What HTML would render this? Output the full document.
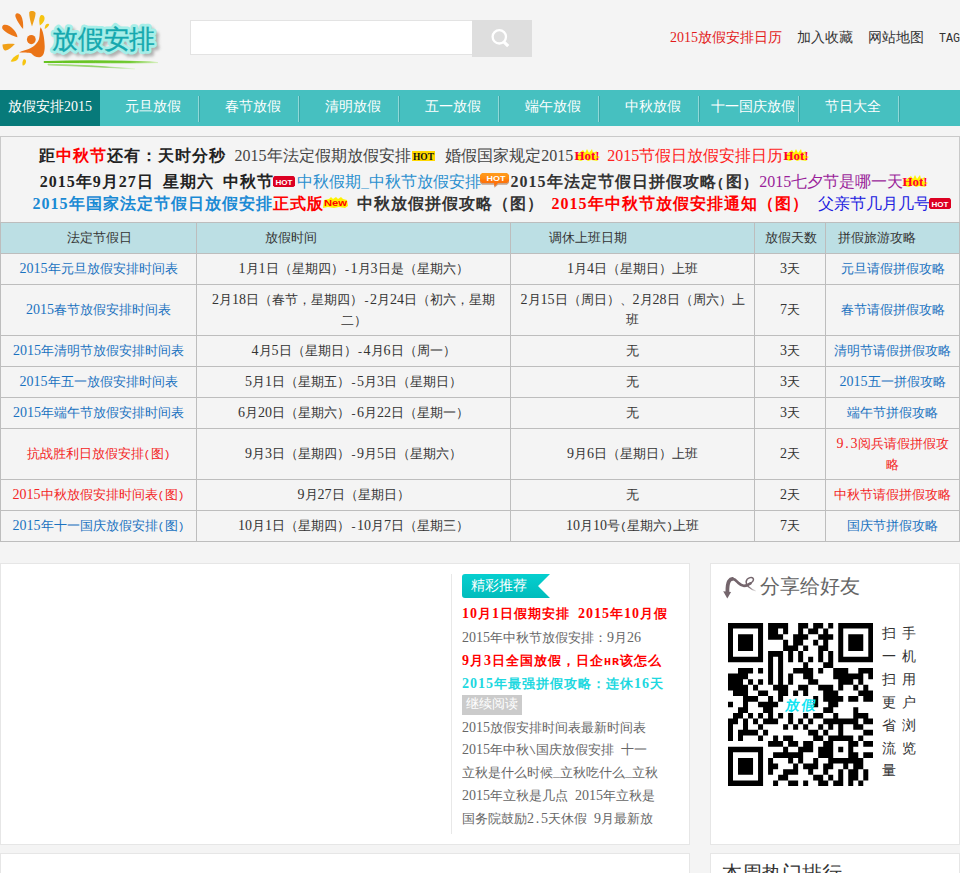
<!DOCTYPE html><html><head><meta charset="utf-8"><style>
html,body{margin:0;padding:0}
body{width:960px;height:873px;overflow:hidden;position:relative;background:#f4f4f4;
 font-family:"Liberation Serif",sans-serif;color:#333;font-size:14px}
.a{position:absolute;white-space:nowrap}
.m{font-family:"Liberation Mono",monospace;font-size:83.333%}
.f13{font-size:13px}
.f13 .m{font-size:89.7%}
.f13 .d{font-size:107.7%}
</style></head><body><svg class="a" style="left:0px;top:0px;overflow:visible" width="170" height="75" viewBox="0 0 170 75"><defs><filter id="lb" x="-20%" y="-20%" width="140%" height="140%"><feGaussianBlur stdDeviation="1.6"/></filter><linearGradient id="gl" x1="0" x2="1"><stop offset="0" stop-color="#62c21c"/><stop offset="0.75" stop-color="#6cc82a"/><stop offset="1" stop-color="#d8f0c0"/></linearGradient><linearGradient id="gl2" x1="0" x2="1"><stop offset="0" stop-color="#a8dc80"/><stop offset="0.6" stop-color="#8cd060"/><stop offset="1" stop-color="#e6f4dc"/></linearGradient></defs><path d="M2.5,26 C4,23.5 10,25 14,30 C16,32.5 17.5,35 17.4,37.2 C13,36 6,33 3,29.5 C2,28.5 2,27 2.5,26 Z" fill="#ec7818"/><path d="M15.5,14.5 C16.5,12.5 19,13 21,15.5 C23,19 23.5,25 23.1,29 C21,27 17.5,21.5 16,18 C15.3,16.5 15.2,15.3 15.5,14.5 Z" fill="#ec7818"/><path d="M29.2,12.5 C30,10.5 34.5,10.5 35.6,13 C35.5,17 33.5,22 32,26.5 C30.5,22 29,16 29.2,12.5 Z" fill="#f0a018"/><path d="M40,16.5 C41,14.5 43.5,14.5 44.5,17.5 C45,20.5 42.5,24 39.8,25.4 C39,22 39,18.5 40,16.5 Z" fill="#f6c410"/><path d="M46,24.5 C47,23.3 49,23.5 49.2,24.8 C48.5,26.5 46.5,28.2 44.7,29 C44.8,27 45.2,25.5 46,24.5 Z" fill="#f6c410"/><path d="M2.5,44.5 C6,43.5 11,43.5 14.9,43.9 C12,47 8.5,50 5.7,50.6 C3.5,50.5 2.5,47.5 2.5,44.5 Z" fill="#f0a018"/><path d="M18.8,54.2 C19.2,57 18,60 15.5,61 C13,61.8 11,61.8 10.7,61.3 C12,58.5 15,55.5 18.8,54.2 Z" fill="#f6c410"/><path d="M23.5,59.5 C25,58.5 26.3,60 26,62 C25.5,64.5 24,65.8 22.7,65.5 C22,63.5 22.5,61 23.5,59.5 Z" fill="#f6c410"/><ellipse cx="31.3" cy="39.6" rx="4.4" ry="4.6" fill="#ea7417"/><path d="M40.5,27.2 C43,30 44.5,38 44.7,46 C44.8,52 43.5,56 40.5,57 C37,57.8 33.5,56 31.5,53.5 C29,52.3 23,52.8 19.2,52.5 C21,51 25,50 28,49.2 C33,47.5 37.5,43.5 39,39 C40,35 39.5,30 40.5,27.2 Z" fill="#ea7417"/><text x="55" y="50.5" textLength="103" lengthAdjust="spacingAndGlyphs" style="font-size:26px;font-family:&quot;Liberation Sans&quot;,sans-serif" fill="#9a9a9a" stroke="#9a9a9a" stroke-width="5" stroke-linejoin="round" filter="url(#lb)" opacity="0.75">放假安排</text><text x="52" y="47.5" textLength="103" lengthAdjust="spacingAndGlyphs" style="font-size:26px;font-family:&quot;Liberation Sans&quot;,sans-serif" fill="#a6eee8" stroke="#a6eee8" stroke-width="6" stroke-linejoin="round">放假安排</text><text x="52" y="47.5" textLength="103" lengthAdjust="spacingAndGlyphs" style="font-size:26px;font-family:&quot;Liberation Sans&quot;,sans-serif" fill="#14a8ae" stroke="#14a8ae" stroke-width="0.35">放假安排</text><path d="M44,61.6 Q90,60 150,61.8 Q155,62.2 158,62.6 Q120,63 44,62.4 Z" fill="url(#gl)" stroke="url(#gl)" stroke-width="1"/><path d="M48,64.2 Q90,65 135,68.9 Q95,66.5 48,65 Z" fill="url(#gl2)" stroke="url(#gl2)" stroke-width="0.8"/></svg><div class="a" style="left:190px;top:20px;width:282px;height:33px;border:1px solid #e3e3e3;border-right:0;background:#fff"></div><div class="a" style="left:472px;top:20px;width:60px;height:37px;background:#dedede"><svg width="60" height="37" style="position:absolute;left:0;top:0"><circle cx="27.3" cy="16.8" r="6.7" fill="none" stroke="#fff" stroke-width="2.3"/><path d="M31.8 21.8 L36.2 26.2" stroke="#fff" stroke-width="3.2"/></svg></div><div class="a" style="left:670px;top:29px;line-height:18px;font-size:14px;color:#e31b1b"><span class="d">2015</span>放假安排日历</div><div class="a" style="left:797px;top:29px;line-height:18px;font-size:14px;color:#333">加入收藏</div><div class="a" style="left:868px;top:29px;line-height:18px;font-size:14px;color:#333">网站地图</div><svg class="a" style="left:939px;top:30px" width="21" height="16"><text x="0" y="11.8" textLength="21" lengthAdjust="spacingAndGlyphs" style="font-family:&quot;Liberation Mono&quot;;font-size:13.5px" fill="#333">TAG</text></svg><div class="a" style="left:0;top:90px;width:960px;height:36px;background:#46c0c0"></div><div class="a" style="left:0;top:90px;width:100px;height:36px;background:#077a7a"></div><div class="a" style="left:0px;top:89px;width:100px;height:36px;line-height:36px;text-align:center;color:#fff;font-size:14px">放假安排<span class="d">2015</span></div><div class="a" style="left:102.5px;top:89px;width:100px;height:36px;line-height:36px;text-align:center;color:#fff;font-size:14px">元旦放假</div><div class="a" style="left:198px;top:96px;width:1px;height:26px;background:#90d8d8"></div><div class="a" style="left:199px;top:96px;width:1px;height:26px;background:#3aa8a8"></div><div class="a" style="left:202.5px;top:89px;width:100px;height:36px;line-height:36px;text-align:center;color:#fff;font-size:14px">春节放假</div><div class="a" style="left:298px;top:96px;width:1px;height:26px;background:#90d8d8"></div><div class="a" style="left:299px;top:96px;width:1px;height:26px;background:#3aa8a8"></div><div class="a" style="left:302.5px;top:89px;width:100px;height:36px;line-height:36px;text-align:center;color:#fff;font-size:14px">清明放假</div><div class="a" style="left:398px;top:96px;width:1px;height:26px;background:#90d8d8"></div><div class="a" style="left:399px;top:96px;width:1px;height:26px;background:#3aa8a8"></div><div class="a" style="left:402.5px;top:89px;width:100px;height:36px;line-height:36px;text-align:center;color:#fff;font-size:14px">五一放假</div><div class="a" style="left:498px;top:96px;width:1px;height:26px;background:#90d8d8"></div><div class="a" style="left:499px;top:96px;width:1px;height:26px;background:#3aa8a8"></div><div class="a" style="left:502.5px;top:89px;width:100px;height:36px;line-height:36px;text-align:center;color:#fff;font-size:14px">端午放假</div><div class="a" style="left:598px;top:96px;width:1px;height:26px;background:#90d8d8"></div><div class="a" style="left:599px;top:96px;width:1px;height:26px;background:#3aa8a8"></div><div class="a" style="left:602.5px;top:89px;width:100px;height:36px;line-height:36px;text-align:center;color:#fff;font-size:14px">中秋放假</div><div class="a" style="left:698px;top:96px;width:1px;height:26px;background:#90d8d8"></div><div class="a" style="left:699px;top:96px;width:1px;height:26px;background:#3aa8a8"></div><div class="a" style="left:702.5px;top:89px;width:100px;height:36px;line-height:36px;text-align:center;color:#fff;font-size:14px">十一国庆放假</div><div class="a" style="left:798px;top:96px;width:1px;height:26px;background:#90d8d8"></div><div class="a" style="left:799px;top:96px;width:1px;height:26px;background:#3aa8a8"></div><div class="a" style="left:802.5px;top:89px;width:100px;height:36px;line-height:36px;text-align:center;color:#fff;font-size:14px">节日大全</div><div class="a" style="left:898px;top:96px;width:1px;height:26px;background:#90d8d8"></div><div class="a" style="left:899px;top:96px;width:1px;height:26px;background:#3aa8a8"></div><div class="a" style="left:0;top:136px;width:958px;height:404px;border:1px solid #c9c9c9;background:#f4f4f4"></div><div class="a" style="left:39px;top:146px;font-size:16px;line-height:20px;color:#222;letter-spacing:1px;font-weight:bold;">距<span style="color:#f00">中秋节</span>还有：天时分秒</div><div class="a" style="left:234.6px;top:146px;font-size:16px;line-height:20px;color:#444;"><span class="d">2015</span>年法定假期放假安排</div><div class="a" style="left:445.3px;top:146px;font-size:16px;line-height:20px;color:#444;">婚假国家规定<span class="d">2015</span></div><div class="a" style="left:607.3px;top:146px;font-size:16px;line-height:20px;color:#f22;"><span class="d">2015</span>节假日放假安排日历</div><div class="a" style="left:39.7px;top:172px;font-size:16px;line-height:20px;color:#222;letter-spacing:1px;font-weight:bold;"><span class="d">2015</span>年<span class="d">9</span>月<span class="d">27</span>日<span class="m"> </span>星期六<span class="m"> </span>中秋节</div><div class="a" style="left:297px;top:172px;font-size:16px;line-height:20px;color:#2a8fcf;">中秋假期<span class="m">_</span>中秋节放假安排</div><div class="a" style="left:510.5px;top:172px;font-size:16px;line-height:20px;color:#333;letter-spacing:1px;font-weight:bold;"><span class="d">2015</span>年法定节假日拼假攻略<span class="m">(</span>图<span class="m">)</span></div><div class="a" style="left:759.3px;top:172px;font-size:16px;line-height:20px;color:#9a1f9a;"><span class="d">2015</span>七夕节是哪一天</div><div class="a" style="left:32.6px;top:194px;font-size:16px;line-height:20px;color:#1a8ad4;letter-spacing:1px;font-weight:bold;"><span class="d">2015</span>年国家法定节假日放假安排</div><div class="a" style="left:272.6px;top:194px;font-size:16px;line-height:20px;color:#f00;letter-spacing:1px;font-weight:bold;">正式版</div><div class="a" style="left:356.5px;top:194px;font-size:16px;line-height:20px;color:#333;letter-spacing:1px;font-weight:bold;">中秋放假拼假攻略（图）</div><div class="a" style="left:551.6px;top:194px;font-size:16px;line-height:20px;color:#f00;letter-spacing:1px;font-weight:bold;"><span class="d">2015</span>年中秋节放假安排通知（图）</div><div class="a" style="left:817.5px;top:194px;font-size:16px;line-height:20px;color:#2020e0;">父亲节几月几号</div><div class="a" style="left:0;top:222px;width:960px;height:1px;background:#bdbdbd"></div><div class="a" style="left:1px;top:223px;width:958px;height:30px;background:#bcdfe4"></div><div class="a" style="left:0;top:253px;width:960px;height:1px;background:#bdbdbd"></div><div class="a" style="left:0;top:284px;width:960px;height:1px;background:#bdbdbd"></div><div class="a" style="left:0;top:335px;width:960px;height:1px;background:#bdbdbd"></div><div class="a" style="left:0;top:366px;width:960px;height:1px;background:#bdbdbd"></div><div class="a" style="left:0;top:397px;width:960px;height:1px;background:#bdbdbd"></div><div class="a" style="left:0;top:428px;width:960px;height:1px;background:#bdbdbd"></div><div class="a" style="left:0;top:479px;width:960px;height:1px;background:#bdbdbd"></div><div class="a" style="left:0;top:510px;width:960px;height:1px;background:#bdbdbd"></div><div class="a" style="left:0;top:541px;width:960px;height:1px;background:#bdbdbd"></div><div class="a" style="left:0px;top:222px;width:1px;height:320px;background:#bdbdbd"></div><div class="a" style="left:196px;top:222px;width:1px;height:320px;background:#bdbdbd"></div><div class="a" style="left:510px;top:222px;width:1px;height:320px;background:#bdbdbd"></div><div class="a" style="left:754px;top:222px;width:1px;height:320px;background:#bdbdbd"></div><div class="a" style="left:825px;top:222px;width:1px;height:320px;background:#bdbdbd"></div><div class="a" style="left:959px;top:222px;width:1px;height:320px;background:#bdbdbd"></div><div class="a f13" style="left:66.7px;top:223px;line-height:30px;color:#333">法定节假日</div><div class="a f13" style="left:265px;top:223px;line-height:30px;color:#333">放假时间</div><div class="a f13" style="left:549px;top:223px;line-height:30px;color:#333">调休上班日期</div><div class="a f13" style="left:765px;top:223px;line-height:30px;color:#333">放假天数</div><div class="a f13" style="left:838px;top:223px;line-height:30px;color:#333">拼假旅游攻略</div><div class="a f13" style="left:1px;top:254px;width:195px;height:30px;display:flex;align-items:center;justify-content:center;text-align:center;box-sizing:border-box;line-height:20px;color:#1a72c0"><div><span class="d">2015</span>年元旦放假安排时间表</div></div><div class="a f13" style="left:197px;top:254px;width:313px;height:30px;display:flex;align-items:center;justify-content:center;text-align:center;box-sizing:border-box;line-height:20px;color:#333"><div><span class="d">1</span>月<span class="d">1</span>日（星期四）<span class="m">-</span><span class="d">1</span>月<span class="d">3</span>日是（星期六）</div></div><div class="a f13" style="left:511px;top:254px;width:243px;height:30px;display:flex;align-items:center;justify-content:center;text-align:center;box-sizing:border-box;line-height:20px;color:#333"><div><span class="d">1</span>月<span class="d">4</span>日（星期日）上班</div></div><div class="a f13" style="left:755px;top:254px;width:70px;height:30px;display:flex;align-items:center;justify-content:center;text-align:center;box-sizing:border-box;line-height:20px;color:#333"><div><span class="d">3</span>天</div></div><div class="a f13" style="left:826px;top:254px;width:133px;height:30px;display:flex;align-items:center;justify-content:center;text-align:center;box-sizing:border-box;line-height:20px;color:#1a72c0"><div>元旦请假拼假攻略</div></div><div class="a f13" style="left:1px;top:285px;width:195px;height:50px;display:flex;align-items:center;justify-content:center;text-align:center;box-sizing:border-box;line-height:20px;color:#1a72c0"><div><span class="d">2015</span>春节放假安排时间表</div></div><div class="a f13" style="left:197px;top:285px;width:313px;height:50px;display:flex;align-items:center;justify-content:center;text-align:center;box-sizing:border-box;line-height:20px;color:#333"><div><span class="d">2</span>月<span class="d">18</span>日（春节，星期四）<span class="m">-</span><span class="d">2</span>月<span class="d">24</span>日（初六，星期<br>二）</div></div><div class="a f13" style="left:511px;top:285px;width:243px;height:50px;display:flex;align-items:center;justify-content:center;text-align:center;box-sizing:border-box;line-height:20px;color:#333"><div><span class="d">2</span>月<span class="d">15</span>日（周日）、<span class="d">2</span>月<span class="d">28</span>日（周六）上<br>班</div></div><div class="a f13" style="left:755px;top:285px;width:70px;height:50px;display:flex;align-items:center;justify-content:center;text-align:center;box-sizing:border-box;line-height:20px;color:#333"><div><span class="d">7</span>天</div></div><div class="a f13" style="left:826px;top:285px;width:133px;height:50px;display:flex;align-items:center;justify-content:center;text-align:center;box-sizing:border-box;line-height:20px;color:#1a72c0"><div>春节请假拼假攻略</div></div><div class="a f13" style="left:1px;top:336px;width:195px;height:30px;display:flex;align-items:center;justify-content:center;text-align:center;box-sizing:border-box;line-height:20px;color:#1a72c0"><div><span class="d">2015</span>年清明节放假安排时间表</div></div><div class="a f13" style="left:197px;top:336px;width:313px;height:30px;display:flex;align-items:center;justify-content:center;text-align:center;box-sizing:border-box;line-height:20px;color:#333"><div><span class="d">4</span>月<span class="d">5</span>日（星期日）<span class="m">-</span><span class="d">4</span>月<span class="d">6</span>日（周一）</div></div><div class="a f13" style="left:511px;top:336px;width:243px;height:30px;display:flex;align-items:center;justify-content:center;text-align:center;box-sizing:border-box;line-height:20px;color:#333"><div>无</div></div><div class="a f13" style="left:755px;top:336px;width:70px;height:30px;display:flex;align-items:center;justify-content:center;text-align:center;box-sizing:border-box;line-height:20px;color:#333"><div><span class="d">3</span>天</div></div><div class="a f13" style="left:826px;top:336px;width:133px;height:30px;display:flex;align-items:center;justify-content:center;text-align:center;box-sizing:border-box;line-height:20px;color:#1a72c0"><div>清明节请假拼假攻略</div></div><div class="a f13" style="left:1px;top:367px;width:195px;height:30px;display:flex;align-items:center;justify-content:center;text-align:center;box-sizing:border-box;line-height:20px;color:#1a72c0"><div><span class="d">2015</span>年五一放假安排时间表</div></div><div class="a f13" style="left:197px;top:367px;width:313px;height:30px;display:flex;align-items:center;justify-content:center;text-align:center;box-sizing:border-box;line-height:20px;color:#333"><div><span class="d">5</span>月<span class="d">1</span>日（星期五）<span class="m">-</span><span class="d">5</span>月<span class="d">3</span>日（星期日）</div></div><div class="a f13" style="left:511px;top:367px;width:243px;height:30px;display:flex;align-items:center;justify-content:center;text-align:center;box-sizing:border-box;line-height:20px;color:#333"><div>无</div></div><div class="a f13" style="left:755px;top:367px;width:70px;height:30px;display:flex;align-items:center;justify-content:center;text-align:center;box-sizing:border-box;line-height:20px;color:#333"><div><span class="d">3</span>天</div></div><div class="a f13" style="left:826px;top:367px;width:133px;height:30px;display:flex;align-items:center;justify-content:center;text-align:center;box-sizing:border-box;line-height:20px;color:#1a72c0"><div><span class="d">2015</span>五一拼假攻略</div></div><div class="a f13" style="left:1px;top:398px;width:195px;height:30px;display:flex;align-items:center;justify-content:center;text-align:center;box-sizing:border-box;line-height:20px;color:#1a72c0"><div><span class="d">2015</span>年端午节放假安排时间表</div></div><div class="a f13" style="left:197px;top:398px;width:313px;height:30px;display:flex;align-items:center;justify-content:center;text-align:center;box-sizing:border-box;line-height:20px;color:#333"><div><span class="d">6</span>月<span class="d">20</span>日（星期六）<span class="m">-</span><span class="d">6</span>月<span class="d">22</span>日（星期一）</div></div><div class="a f13" style="left:511px;top:398px;width:243px;height:30px;display:flex;align-items:center;justify-content:center;text-align:center;box-sizing:border-box;line-height:20px;color:#333"><div>无</div></div><div class="a f13" style="left:755px;top:398px;width:70px;height:30px;display:flex;align-items:center;justify-content:center;text-align:center;box-sizing:border-box;line-height:20px;color:#333"><div><span class="d">3</span>天</div></div><div class="a f13" style="left:826px;top:398px;width:133px;height:30px;display:flex;align-items:center;justify-content:center;text-align:center;box-sizing:border-box;line-height:20px;color:#1a72c0"><div>端午节拼假攻略</div></div><div class="a f13" style="left:1px;top:429px;width:195px;height:50px;display:flex;align-items:center;justify-content:center;text-align:center;box-sizing:border-box;line-height:20px;color:#f32424"><div>抗战胜利日放假安排<span class="m">(</span>图<span class="m">)</span></div></div><div class="a f13" style="left:197px;top:429px;width:313px;height:50px;display:flex;align-items:center;justify-content:center;text-align:center;box-sizing:border-box;line-height:20px;color:#333"><div><span class="d">9</span>月<span class="d">3</span>日（星期四）<span class="m">-</span><span class="d">9</span>月<span class="d">5</span>日（星期六）</div></div><div class="a f13" style="left:511px;top:429px;width:243px;height:50px;display:flex;align-items:center;justify-content:center;text-align:center;box-sizing:border-box;line-height:20px;color:#333"><div><span class="d">9</span>月<span class="d">6</span>日（星期日）上班</div></div><div class="a f13" style="left:755px;top:429px;width:70px;height:50px;display:flex;align-items:center;justify-content:center;text-align:center;box-sizing:border-box;line-height:20px;color:#333"><div><span class="d">2</span>天</div></div><div class="a f13" style="left:826px;top:429px;width:133px;height:50px;display:flex;align-items:center;justify-content:center;text-align:center;box-sizing:border-box;line-height:20px;color:#f32424"><div><span class="d">9</span><span class="m">.</span><span class="d">3</span>阅兵请假拼假攻<br>略</div></div><div class="a f13" style="left:1px;top:480px;width:195px;height:30px;display:flex;align-items:center;justify-content:center;text-align:center;box-sizing:border-box;line-height:20px;color:#f32424"><div><span class="d">2015</span>中秋放假安排时间表<span class="m">(</span>图<span class="m">)</span></div></div><div class="a f13" style="left:197px;top:480px;width:313px;height:30px;display:flex;align-items:center;justify-content:center;text-align:center;box-sizing:border-box;line-height:20px;color:#333"><div><span class="d">9</span>月<span class="d">27</span>日（星期日）</div></div><div class="a f13" style="left:511px;top:480px;width:243px;height:30px;display:flex;align-items:center;justify-content:center;text-align:center;box-sizing:border-box;line-height:20px;color:#333"><div>无</div></div><div class="a f13" style="left:755px;top:480px;width:70px;height:30px;display:flex;align-items:center;justify-content:center;text-align:center;box-sizing:border-box;line-height:20px;color:#333"><div><span class="d">2</span>天</div></div><div class="a f13" style="left:826px;top:480px;width:133px;height:30px;display:flex;align-items:center;justify-content:center;text-align:center;box-sizing:border-box;line-height:20px;color:#f32424"><div>中秋节请假拼假攻略</div></div><div class="a f13" style="left:1px;top:511px;width:195px;height:30px;display:flex;align-items:center;justify-content:center;text-align:center;box-sizing:border-box;line-height:20px;color:#1a72c0"><div><span class="d">2015</span>年十一国庆放假安排<span class="m">(</span>图<span class="m">)</span></div></div><div class="a f13" style="left:197px;top:511px;width:313px;height:30px;display:flex;align-items:center;justify-content:center;text-align:center;box-sizing:border-box;line-height:20px;color:#333"><div><span class="d">10</span>月<span class="d">1</span>日（星期四）<span class="m">-</span><span class="d">10</span>月<span class="d">7</span>日（星期三）</div></div><div class="a f13" style="left:511px;top:511px;width:243px;height:30px;display:flex;align-items:center;justify-content:center;text-align:center;box-sizing:border-box;line-height:20px;color:#333"><div><span class="d">10</span>月<span class="d">10</span>号<span class="m">(</span>星期六<span class="m">)</span>上班</div></div><div class="a f13" style="left:755px;top:511px;width:70px;height:30px;display:flex;align-items:center;justify-content:center;text-align:center;box-sizing:border-box;line-height:20px;color:#333"><div><span class="d">7</span>天</div></div><div class="a f13" style="left:826px;top:511px;width:133px;height:30px;display:flex;align-items:center;justify-content:center;text-align:center;box-sizing:border-box;line-height:20px;color:#1a72c0"><div>国庆节拼假攻略</div></div><svg class="a" style="left:412px;top:151px;overflow:visible" width="23" height="10" viewBox="0 0 23 10"><rect x="0" y="0" width="23" height="10" fill="#ffd800"/><text x="11.5" y="8.6" text-anchor="middle" style="font-family:&quot;Liberation Serif&quot;;font-weight:bold;font-size:10px" textLength="21" lengthAdjust="spacingAndGlyphs" fill="#111">HOT</text></svg><svg class="a" style="left:574px;top:149px;overflow:visible" width="26" height="12" viewBox="0 0 26 12"><path d="M3 5.4 L9 1 L11 4 L13 0 L15 4 L18 0 L19 4 L23 2 L21 6 L26 8 L22 10 L24 12 L17 11 L14 12 L11 10 L7 12 L3 11 Z" fill="#fff200"/><text x="0.5" y="11" style="font-family:&quot;Liberation Serif&quot;;font-weight:bold;font-size:12.5px" textLength="25" lengthAdjust="spacingAndGlyphs" fill="#ff0033">Hot!</text></svg><svg class="a" style="left:783px;top:149px;overflow:visible" width="26" height="12" viewBox="0 0 26 12"><path d="M3 5.4 L9 1 L11 4 L13 0 L15 4 L18 0 L19 4 L23 2 L21 6 L26 8 L22 10 L24 12 L17 11 L14 12 L11 10 L7 12 L3 11 Z" fill="#fff200"/><text x="0.5" y="11" style="font-family:&quot;Liberation Serif&quot;;font-weight:bold;font-size:12.5px" textLength="25" lengthAdjust="spacingAndGlyphs" fill="#ff0033">Hot!</text></svg><svg class="a" style="left:273px;top:176px;overflow:visible" width="22" height="11" viewBox="0 0 22 11"><path d="M1.5 0 H20.5 L22 1.5 V9.5 L20.5 11 H1.5 L0 9.5 V1.5 Z" fill="#dc0022"/><text x="11" y="8.6" text-anchor="middle" style="font-family:&quot;Liberation Sans&quot;;font-weight:bold;font-size:7.5px" textLength="17" lengthAdjust="spacingAndGlyphs" fill="#fff">HOT</text></svg><svg class="a" style="left:480px;top:173px;overflow:visible" width="30" height="15" viewBox="0 0 30 15"><defs><linearGradient id="og" x1="0" y1="0" x2="0" y2="1"><stop offset="0" stop-color="#ff9c1e"/><stop offset="0.45" stop-color="#ff8a10"/><stop offset="0.5" stop-color="#ff7a0a"/><stop offset="1" stop-color="#ff6a08"/></linearGradient></defs><path d="M2 1 H27 L29 3 V9 L27 11 H18 L14.5 14 L14 11 H2 L0 9 V3 Z" fill="#a86a3c" transform="translate(0,0.8)" opacity="0.6"/><path d="M2 0 H27 L29 2 V8 L27 10 H18 L14.5 13.5 L14 10 H2 L0 8 V2 Z" fill="url(#og)"/><text x="16" y="8.3" text-anchor="middle" style="font-family:&quot;Liberation Sans&quot;;font-weight:bold;font-size:8px" textLength="19" lengthAdjust="spacingAndGlyphs" fill="#fff">HOT</text></svg><svg class="a" style="left:902px;top:175px;overflow:visible" width="26" height="12" viewBox="0 0 26 12"><path d="M3 5.4 L9 1 L11 4 L13 0 L15 4 L18 0 L19 4 L23 2 L21 6 L26 8 L22 10 L24 12 L17 11 L14 12 L11 10 L7 12 L3 11 Z" fill="#fff200"/><text x="0.5" y="11" style="font-family:&quot;Liberation Serif&quot;;font-weight:bold;font-size:12.5px" textLength="25" lengthAdjust="spacingAndGlyphs" fill="#ff0033">Hot!</text></svg><svg class="a" style="left:323px;top:197px;overflow:visible" width="25" height="11" viewBox="0 0 25 11"><path d="M1 3 L6 2 L8 0 L10 2 L13 0 L15 2 L18 0 L20 2 L24 3 L25 9 L22 11 L16 10 L11 11 L5 10 L0 11 Z" fill="#fff200"/><text x="1" y="9" style="font-family:&quot;Liberation Sans&quot;;font-weight:bold;font-size:9.5px" textLength="23" lengthAdjust="spacingAndGlyphs" fill="#f00">New</text></svg><svg class="a" style="left:929px;top:198px;overflow:visible" width="22" height="11" viewBox="0 0 22 11"><path d="M1.5 0 H20.5 L22 1.5 V9.5 L20.5 11 H1.5 L0 9.5 V1.5 Z" fill="#dc0022"/><text x="11" y="8.6" text-anchor="middle" style="font-family:&quot;Liberation Sans&quot;;font-weight:bold;font-size:7.5px" textLength="17" lengthAdjust="spacingAndGlyphs" fill="#fff">HOT</text></svg><div class="a" style="left:0;top:563px;width:688px;height:280px;border:1px solid #e6e6e6;background:#fff"></div><div class="a" style="left:710px;top:563px;width:248px;height:280px;border:1px solid #e6e6e6;background:#fff"></div><div class="a" style="left:0;top:853px;width:688px;height:40px;border:1px solid #e6e6e6;background:#fff"></div><div class="a" style="left:710px;top:853px;width:248px;height:40px;border:1px solid #e6e6e6;background:#fff"></div><div class="a" style="left:451px;top:574px;width:1px;height:260px;background:#e8e8e8"></div><svg class="a" style="left:462px;top:574px;overflow:visible" width="88" height="24" viewBox="0 0 88 24"><defs><linearGradient id="rg" x1="0" y1="0" x2="0" y2="1"><stop offset="0" stop-color="#06cfcf"/><stop offset="1" stop-color="#00bcbc"/></linearGradient></defs><path d="M3 0 H88 L76 12 L88 24 H3 Q0 24 0 21 V3 Q0 0 3 0 Z" fill="url(#rg)"/></svg><div class="a" style="left:471px;top:577px;font-size:14px;line-height:18px;color:#fff">精彩推荐</div><div class="a f13" style="left:462px;top:605px;width:210px;overflow:hidden;line-height:18px;color:#f00;font-weight:bold;letter-spacing:1px;"><span class="d">10</span>月<span class="d">1</span>日假期安排<span class="m"> </span><span class="d">2015</span>年<span class="d">10</span>月假</div><div class="a f13" style="left:462px;top:629px;width:210px;overflow:hidden;line-height:18px;color:#666;"><span class="d">2015</span>年中秋节放假安排：<span class="d">9</span>月<span class="d">26</span></div><div class="a f13" style="left:462px;top:652px;width:210px;overflow:hidden;line-height:18px;color:#f00;font-weight:bold;letter-spacing:1px;"><span class="d">9</span>月<span class="d">3</span>日全国放假，日企<span class="m">HR</span>该怎么</div><div class="a f13" style="left:462px;top:675px;width:210px;overflow:hidden;line-height:18px;color:#1dd8e0;font-weight:bold;letter-spacing:1px;"><span class="d">2015</span>年最强拼假攻略：连休<span class="d">16</span>天</div><div class="a" style="left:462px;top:695px;width:60px;height:20px;background:#cbcbcb;color:#fff;font-size:13px;line-height:18px;text-align:center">继续阅读</div><div class="a f13" style="left:462px;top:718.5px;width:210px;overflow:hidden;line-height:18px;color:#666;"><span class="d">2015</span>放假安排时间表最新时间表</div><div class="a f13" style="left:462px;top:741.4px;width:210px;overflow:hidden;line-height:18px;color:#666;"><span class="d">2015</span>年中秋<span class="m">\</span>国庆放假安排<span class="m"> </span>十一</div><div class="a f13" style="left:462px;top:764.3px;width:210px;overflow:hidden;line-height:18px;color:#666;">立秋是什么时候<span class="m">_</span>立秋吃什么<span class="m">_</span>立秋</div><div class="a f13" style="left:462px;top:787.2px;width:210px;overflow:hidden;line-height:18px;color:#666;"><span class="d">2015</span>年立秋是几点<span class="m"> </span><span class="d">2015</span>年立秋是</div><div class="a f13" style="left:462px;top:810.1px;width:210px;overflow:hidden;line-height:18px;color:#666;">国务院鼓励<span class="d">2</span><span class="m">.</span><span class="d">5</span>天休假<span class="m"> </span><span class="d">9</span>月最新放</div><div class="a" style="left:760px;top:573px;font-size:20px;line-height:26px;color:#666">分享给好友</div><svg class="a" style="left:720px;top:574px;overflow:visible" width="40" height="28" viewBox="0 0 40 28"><defs><linearGradient id="tl" x1="0" x2="1"><stop offset="0" stop-color="#6d5d64"/><stop offset="1" stop-color="#6d5d64" stop-opacity="0.1"/></linearGradient></defs><path d="M7.4 18.5 C7.3 13 7.6 9.5 9 7.2 C10.3 5.2 12 4.7 13.2 4.9" fill="none" stroke="#74656c" stroke-width="3.8"/><path d="M12.6 4.9 C15 5.2 16.5 7 18.5 9 C20 10.5 21.8 11.8 24 11.8 C26.5 11.8 28.5 10.6 30.5 9.3" fill="none" stroke="#74656c" stroke-width="2.7" stroke-linecap="round"/><path d="M30 9.6 C32.5 8 33.8 6.5 33.4 5 C33 3.6 31.5 3.2 30 3.6 C28 4.2 26.3 6 26.1 7.8 C26 9.8 27 11.5 28.5 12.8" fill="none" stroke="#74656c" stroke-width="1.5"/><path d="M28.2 12.5 C30.5 14.6 33 16.2 36 17" fill="none" stroke="url(#tl)" stroke-width="1.1"/><path d="M3.2 17.2 L11.1 18.1 L7.3 24.4 Z" fill="#74656c"/></svg><div class="a" style="left:882px;top:623px;width:16px;font-size:14px;line-height:22.9px;color:#333;white-space:normal">扫一扫更省流量</div><div class="a" style="left:902px;top:623px;width:16px;font-size:14px;line-height:22.9px;color:#333;white-space:normal">手机用户浏览</div><div class="a" style="left:722px;top:860px;font-size:20px;line-height:26px;color:#333">本周热门排行</div><svg class="a" style="left:728.2px;top:623.2px" width="145.3" height="163" viewBox="0 0 29 29" preserveAspectRatio="none"><path d="M0 0h7v1h-7zM8 0h4v1h-4zM14 0h2v1h-2zM17 0h2v1h-2zM20 0h1v1h-1zM22 0h7v1h-7zM0 1h1v1h-1zM6 1h1v1h-1zM8 1h2v1h-2zM11 1h1v1h-1zM14 1h1v1h-1zM16 1h2v1h-2zM19 1h1v1h-1zM22 1h1v1h-1zM28 1h1v1h-1zM0 2h1v1h-1zM2 2h3v1h-3zM6 2h1v1h-1zM8 2h3v1h-3zM13 2h3v1h-3zM18 2h3v1h-3zM22 2h1v1h-1zM24 2h3v1h-3zM28 2h1v1h-1zM0 3h1v1h-1zM2 3h3v1h-3zM6 3h1v1h-1zM11 3h1v1h-1zM13 3h2v1h-2zM17 3h1v1h-1zM19 3h1v1h-1zM22 3h1v1h-1zM24 3h3v1h-3zM28 3h1v1h-1zM0 4h1v1h-1zM2 4h3v1h-3zM6 4h1v1h-1zM11 4h3v1h-3zM15 4h1v1h-1zM18 4h2v1h-2zM22 4h1v1h-1zM24 4h3v1h-3zM28 4h1v1h-1zM0 5h1v1h-1zM6 5h1v1h-1zM8 5h3v1h-3zM12 5h1v1h-1zM14 5h1v1h-1zM18 5h1v1h-1zM20 5h1v1h-1zM22 5h1v1h-1zM28 5h1v1h-1zM0 6h7v1h-7zM8 6h1v1h-1zM10 6h1v1h-1zM12 6h1v1h-1zM14 6h1v1h-1zM16 6h1v1h-1zM18 6h1v1h-1zM20 6h1v1h-1zM22 6h7v1h-7zM8 7h1v1h-1zM10 7h1v1h-1zM15 7h1v1h-1zM19 7h2v1h-2zM2 8h3v1h-3zM6 8h1v1h-1zM8 8h1v1h-1zM10 8h1v1h-1zM13 8h4v1h-4zM18 8h1v1h-1zM21 8h3v1h-3zM26 8h3v1h-3zM0 9h4v1h-4zM8 9h1v1h-1zM10 9h1v1h-1zM12 9h1v1h-1zM15 9h2v1h-2zM21 9h6v1h-6zM28 9h1v1h-1zM0 10h3v1h-3zM4 10h1v1h-1zM6 10h1v1h-1zM8 10h1v1h-1zM10 10h1v1h-1zM12 10h1v1h-1zM16 10h2v1h-2zM22 10h3v1h-3zM26 10h1v1h-1zM0 11h4v1h-4zM5 11h1v1h-1zM9 11h3v1h-3zM14 11h2v1h-2zM18 11h3v1h-3zM22 11h1v1h-1zM25 11h1v1h-1zM27 11h1v1h-1zM1 12h3v1h-3zM6 12h2v1h-2zM10 12h2v1h-2zM13 12h1v1h-1zM15 12h1v1h-1zM19 12h3v1h-3zM26 12h3v1h-3zM3 13h3v1h-3zM8 13h1v1h-1zM10 13h1v1h-1zM17 13h1v1h-1zM19 13h4v1h-4zM24 13h2v1h-2zM27 13h2v1h-2zM0 14h1v1h-1zM3 14h1v1h-1zM6 14h4v1h-4zM17 14h1v1h-1zM20 14h2v1h-2zM2 15h2v1h-2zM7 15h2v1h-2zM19 15h2v1h-2zM25 15h1v1h-1zM1 16h2v1h-2zM4 16h1v1h-1zM6 16h1v1h-1zM8 16h1v1h-1zM10 16h1v1h-1zM12 16h1v1h-1zM15 16h1v1h-1zM17 16h2v1h-2zM21 16h1v1h-1zM25 16h3v1h-3zM0 17h2v1h-2zM3 17h1v1h-1zM5 17h1v1h-1zM7 17h3v1h-3zM12 17h1v1h-1zM14 17h1v1h-1zM16 17h1v1h-1zM19 17h7v1h-7zM27 17h2v1h-2zM0 18h1v1h-1zM3 18h1v1h-1zM6 18h1v1h-1zM11 18h1v1h-1zM13 18h1v1h-1zM15 18h1v1h-1zM18 18h1v1h-1zM20 18h1v1h-1zM22 18h1v1h-1zM25 18h2v1h-2zM0 19h1v1h-1zM2 19h4v1h-4zM7 19h1v1h-1zM16 19h2v1h-2zM19 19h1v1h-1zM22 19h1v1h-1zM27 19h2v1h-2zM0 20h1v1h-1zM2 20h1v1h-1zM6 20h1v1h-1zM9 20h1v1h-1zM11 20h2v1h-2zM17 20h2v1h-2zM20 20h5v1h-5zM26 20h1v1h-1zM8 21h3v1h-3zM12 21h2v1h-2zM15 21h2v1h-2zM19 21h2v1h-2zM24 21h2v1h-2zM27 21h2v1h-2zM0 22h7v1h-7zM11 22h1v1h-1zM14 22h3v1h-3zM18 22h3v1h-3zM22 22h1v1h-1zM24 22h1v1h-1zM0 23h1v1h-1zM6 23h1v1h-1zM9 23h6v1h-6zM18 23h3v1h-3zM24 23h2v1h-2zM27 23h2v1h-2zM0 24h1v1h-1zM2 24h3v1h-3zM6 24h1v1h-1zM8 24h1v1h-1zM12 24h1v1h-1zM14 24h1v1h-1zM17 24h1v1h-1zM20 24h7v1h-7zM0 25h1v1h-1zM2 25h3v1h-3zM6 25h1v1h-1zM8 25h2v1h-2zM13 25h1v1h-1zM15 25h3v1h-3zM19 25h2v1h-2zM23 25h1v1h-1zM25 25h2v1h-2zM0 26h1v1h-1zM2 26h3v1h-3zM6 26h1v1h-1zM8 26h1v1h-1zM11 26h3v1h-3zM16 26h1v1h-1zM19 26h1v1h-1zM22 26h1v1h-1zM24 26h2v1h-2zM27 26h1v1h-1zM0 27h1v1h-1zM6 27h1v1h-1zM10 27h2v1h-2zM17 27h2v1h-2zM20 27h1v1h-1zM22 27h1v1h-1zM24 27h2v1h-2zM27 27h1v1h-1zM0 28h7v1h-7zM9 28h1v1h-1zM12 28h2v1h-2zM15 28h1v1h-1zM18 28h2v1h-2zM21 28h2v1h-2zM24 28h1v1h-1zM26 28h1v1h-1z" fill="#000"/></svg><div class="a" style="left:786px;top:697px;font-size:14px;line-height:18px;font-weight:bold;color:#10e4f2;letter-spacing:2px;transform:skewX(-8deg)">放假</div></body></html>
